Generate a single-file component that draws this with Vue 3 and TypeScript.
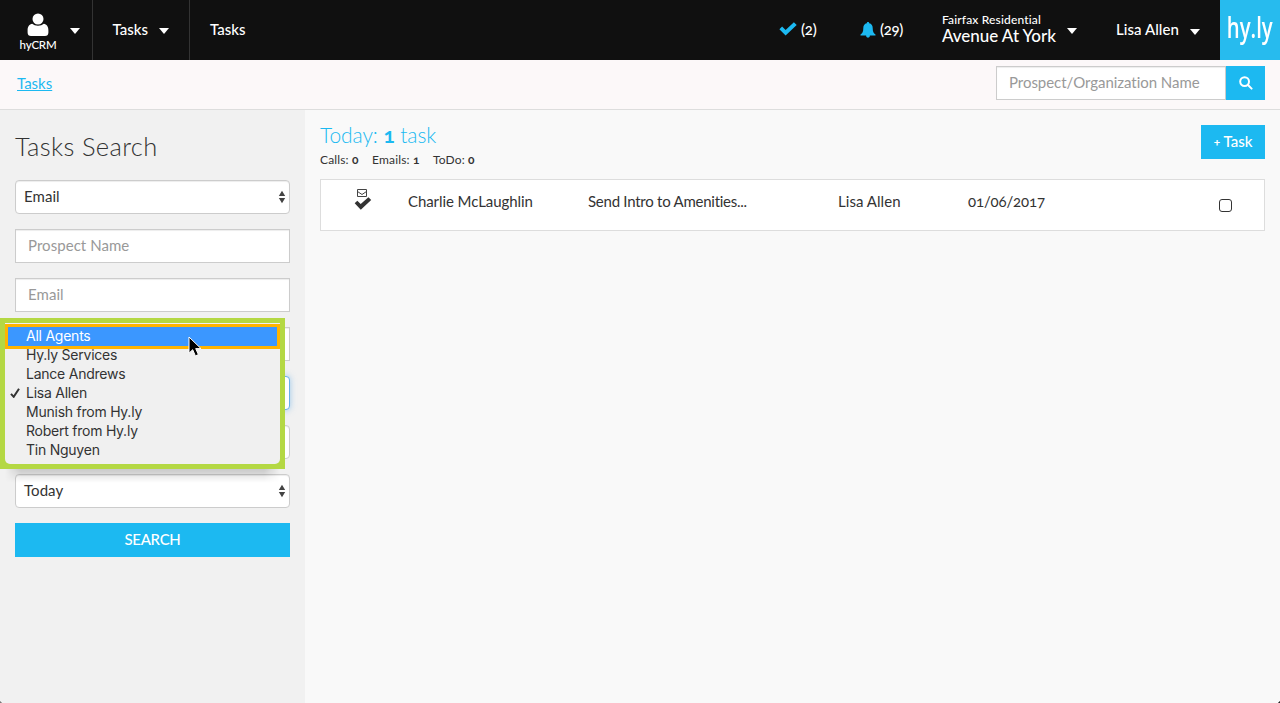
<script setup lang="ts">
interface Agent {
  name: string
  selected?: boolean
  active?: boolean
}

const agents: Agent[] = [
  { name: 'All Agents', active: true },
  { name: 'Hy.ly Services' },
  { name: 'Lance Andrews' },
  { name: 'Lisa Allen', selected: true },
  { name: 'Munish from Hy.ly' },
  { name: 'Robert from Hy.ly' },
  { name: 'Tin Nguyen' },
]
</script>

<template>
  <div class="page">
    <header class="topbar">
      <div class="brand">
        <div class="brand-mark">
          <svg class="user" width="22" height="24" viewBox="0 0 22 24">
            <path d="M5.200 10.700C2.400 11 .6 13.500.6 17.400v2c0 2.300 1.300 3.600 3.400 3.600h14c2.100 0 3.400-1.300 3.400-3.600v-2c0-3.900-1.800-6.400-4.600-6.700-1.500 1.300-3.400 2-5.800 2s-4.300-.7-5.800-2z" />
            <circle cx="11" cy="6" r="5.500" />
          </svg>
          <span class="brand-name">hyCRM</span>
        </div>
        <i class="caret"></i>
      </div>
      <div class="module"><span>Tasks</span><i class="caret"></i></div>
      <div class="section">Tasks</div>
      <div class="counter done">
        <svg width="18" height="14" viewBox="0 0 18 14"><path d="M.4 7.300 3.100 4.600l3.500 3.500L14.900.2l2.800 2.700L6.600 13.400z" /></svg>
        <span>(2)</span>
      </div>
      <div class="counter alerts">
        <svg width="16" height="16" viewBox="0 0 16 16"><path d="M8 0c.7 0 1.200.5 1.200 1.200 2.400.5 3.500 2.400 3.500 4.700 0 3.700.9 5.400 2.800 6.700v1h-5.600A1.900 1.900 0 0 1 8 15.700a1.900 1.900 0 0 1-1.900-2.100H.5v-1c1.900-1.300 2.800-3 2.800-6.700 0-2.300 1.100-4.200 3.500-4.700C6.800.5 7.300 0 8 0z" /></svg>
        <span>(29)</span>
      </div>
      <div class="property">
        <div class="property-text">
          <span class="company">Fairfax Residential</span>
          <span class="community">Avenue At York</span>
        </div>
        <i class="caret"></i>
      </div>
      <div class="account"><span>Lisa Allen</span><i class="caret"></i></div>
      <div class="logo"><span>hy.ly</span></div>
    </header>

    <div class="subbar">
      <a class="crumb">Tasks</a>
      <div class="lookup">
        <div class="lookup-input"><span>Prospect/Organization Name</span></div>
        <div class="lookup-btn">
          <svg width="14" height="14" viewBox="0 0 14 14"><circle cx="5.600" cy="5.600" r="4.400" /><path d="m9 9 3.600 3.600" /></svg>
        </div>
      </div>
    </div>

    <div class="body">
      <aside class="sidebar">
        <h2>Tasks Search</h2>
        <div class="field select">
          <span>Email</span>
          <svg class="arrows" width="8" height="14" viewBox="0 0 8 14"><path d="M4 .7 7.200 6H.8zM4 13.300.8 8h6.400z" /></svg>
        </div>
        <div class="field"><span class="ph">Prospect Name</span></div>
        <div class="field"><span class="ph">Email</span></div>
        <div class="field"></div>
        <div class="field select focused"></div>
        <div class="field select"></div>
        <div class="field select">
          <span>Today</span>
          <svg class="arrows" width="8" height="14" viewBox="0 0 8 14"><path d="M4 .7 7.200 6H.8zM4 13.300.8 8h6.400z" /></svg>
        </div>
        <div class="search-btn">SEARCH</div>
      </aside>

      <main class="content">
        <div class="summary">
          <div>
            <h3>Today: <b>1</b> task</h3>
            <div class="totals">
              <span>Calls: <b>0</b></span><span>Emails: <b>1</b></span><span>ToDo: <b>0</b></span>
            </div>
          </div>
          <div class="add-btn"><span class="plus">+</span> Task</div>
        </div>
        <div class="row">
          <div class="kind">
            <svg width="18" height="22" viewBox="0 0 18 22">
              <path class="mail" d="M3.500 1.500h9v7h-9zM3.500 3.500 8 6.500l4.500-3" />
              <path class="tick" d="m.7 15.300 2.600-2.500 3.400 3.300 7.700-6.800 2.800 2.600L6.800 21.800z" />
            </svg>
          </div>
          <div class="who">Charlie McLaughlin</div>
          <div class="what">Send Intro to Amenities...</div>
          <div class="agent">Lisa Allen</div>
          <div class="date">01/06/2017</div>
          <div class="box"></div>
        </div>
      </main>
    </div>

    <div class="menu">
      <ul>
        <li v-for="a in agents" :key="a.name" :class="{ active: a.active }">
          <svg v-if="a.selected" class="mark" width="10" height="10" viewBox="0 0 10 10"><path d="m1 5.800 2.700 3L9 .8" /></svg>
          <span>{{ a.name }}</span>
        </li>
      </ul>
      <div class="ring"></div>
    </div>
    <svg class="pointer" width="14" height="22" viewBox="0 0 14 22"><path d="M1 1v16.200l3.700-3.500 2.700 6.200 3-1.300-2.700-6H13z" /></svg>
    <i class="corner left"></i>
    <i class="corner right"></i>
  </div>
</template>

<style>
html, body { margin: 0; overflow: hidden; }
</style>

<style scoped>
* { box-sizing: border-box; }
.page {
  position: relative;
  width: 1280px;
  height: 703px;
  overflow: hidden;
  background: #f9f9f9;
  color: #333;
  font: 14px/20px Lato, "Open Sans", sans-serif;
  font-variant-ligatures: no-common-ligatures;
  font-feature-settings: "onum" 1, "liga" 0;
  display: flex;
  flex-direction: column;
  white-space: nowrap;
}
.topbar {
  height: 60px;
  flex: none;
  display: flex;
  background: #101010;
  color: #fff;
  font-size: 15px;
  font-weight: 500;
}
.caret {
  width: 10px;
  height: 6px;
  background: #fff;
  clip-path: polygon(0 0, 100% 0, 50% 100%);
  flex: none;
}
.brand { width: 93px; border-right: 1px solid #333; padding-left: 19px; display: flex; }
.brand-mark { width: 38px; padding-top: 13px; display: flex; flex-direction: column; align-items: center; }
.user { fill: #fff; display: block; }
.brand-name { font-size: 11.500px; line-height: 14px; margin-top: 1px; font-weight: 500; letter-spacing: -.2px; }
.brand .caret { margin: 28px 0 0 13px; }
.module { width: 97px; border-right: 1px solid #333; padding-left: 19.500px; display: flex; line-height: 58px; }
.module span { width: 36.500px; }
.module .caret { margin: 28px 0 0 10px; }
.section { padding-left: 20px; line-height: 58px; width: 588px; }
.counter { display: flex; line-height: 58px; fill: #1cb9f1; }
.done { width: 82px; padding-left: 1px; }
.done svg { margin-top: 22px; }
.done span { margin-left: 4px; letter-spacing: -.2px; }
.alerts { width: 82px; }
.alerts svg { margin-top: 22px; }
.alerts span { margin-left: 4px; letter-spacing: -.3px; }
.property { width: 174px; display: flex; }
.property-text { width: 114px; padding-top: 12px; display: flex; flex-direction: column; }
.company { font-size: 12px; line-height: 16px; letter-spacing: .15px; }
.community { font-size: 17px; line-height: 16px; letter-spacing: -.05px; }
.property .caret { margin: 28px 0 0 11px; }
.account { width: 104px; display: flex; line-height: 58px; }
.account span { width: 63px; letter-spacing: .05px; }
.account .caret { margin: 29px 0 0 11px; }
.logo { width: 60px; height: 60px; background: #27bbee; display: flex; justify-content: center; }
.logo span { font: 600 29px/54px "Open Sans", sans-serif; transform: scaleX(.7); }
.subbar {
  height: 50px;
  flex: none;
  background: #fcf8f9;
  border-bottom: 1px solid #ddd;
  display: flex;
  justify-content: space-between;
  padding: 6px 15px 0 17px;
}
.crumb { color: #1cb9f1; font-size: 15px; line-height: 35px; text-decoration: underline; }
.lookup { display: flex; }
.lookup-input {
  width: 230px;
  height: 34px;
  border: 1px solid #ccc;
  background: #fff;
  box-shadow: inset 0 1px 1px rgba(0, 0, 0, .075);
  padding-left: 12px;
  line-height: 31px;
  color: #999;
  font-size: 15px;
  letter-spacing: -.04px;
}
.lookup-btn { width: 39px; height: 34px; background: #1cb9f1; display: flex; align-items: center; justify-content: center; }
.lookup-btn svg { fill: none; stroke: #fff; stroke-width: 2; stroke-linecap: round; }
.body { flex: 1; display: flex; }
.sidebar { width: 305px; background: #f1f1f1; padding: 24px 15px 0; }
h2 { margin: 0 0 20px; font-size: 25.500px; line-height: 25px; height: 26px; font-weight: 300; color: #333; letter-spacing: .35px; }
.field {
  height: 34px;
  margin-bottom: 15px;
  border: 1px solid #ccc;
  background: #fff;
  box-shadow: inset 0 1px 1px rgba(0, 0, 0, .075);
  padding: 0 4px 0 12px;
  line-height: 32px;
  font-size: 15px;
  display: flex;
  justify-content: space-between;
}
.field span { line-height: 30px; letter-spacing: .05px; }
.select { border-radius: 4px; padding: 0 3px 0 8px; }
.focused { border-color: #66afe9; box-shadow: 0 0 6px rgba(102, 175, 233, .6); }
.ph { color: #999; }
.arrows { fill: #444; margin-top: 9px; }
.search-btn { height: 34px; background: #1cb9f1; color: #fff; text-align: center; line-height: 32px; font-size: 15px; font-weight: 500; letter-spacing: -.3px; }
.content { flex: 1; padding: 15px 15px 0; }
.summary { display: flex; justify-content: space-between; height: 54px; }
h3 { margin: 0; font-size: 21px; line-height: 20px; height: 22px; font-weight: 300; color: #1cb9f1; letter-spacing: -.1px; }
h3 b { font-weight: 700; }
.totals { display: flex; gap: 13.500px; font-size: 12px; line-height: 16px; margin-top: 5px; letter-spacing: .15px; }
.add-btn { width: 64px; height: 34px; background: #1cb9f1; color: #fff; font-size: 15px; line-height: 33px; text-align: center; font-weight: 500; }
.plus { font-size: 12px; font-weight: 700; position: relative; top: -1px; }
.row { height: 52px; background: #fff; border: 1px solid #ddd; display: flex; line-height: 43px; font-size: 15px; }
.kind { width: 87px; padding: 8px 0 0 33px; line-height: 0; }
.mail { fill: none; stroke: #444; stroke-width: 1; }
.tick { fill: #333; }
.who { width: 180px; letter-spacing: -.08px; }
.what { width: 250px; letter-spacing: -.25px; }
.agent { width: 130px; letter-spacing: .05px; }
.date { width: 251px; letter-spacing: -.15px; }
.box { width: 13px; height: 13px; border: 1px solid #333; border-radius: 3px; margin-top: 19px; }
.menu {
  position: absolute;
  left: 0;
  top: 318px;
  width: 285px;
  height: 151px;
  border: 5px solid #b4d843;
  background: #b4d843;
}
.menu::after {
  content: "";
  position: absolute;
  left: 0;
  top: 146px;
  width: 275px;
  height: 14px;
  background: linear-gradient(rgba(0, 0, 0, .16), transparent);
  mask-image: linear-gradient(90deg, transparent, #000 16px, #000 259px, transparent);
}
ul {
  list-style: none;
  margin: 0;
  padding: 4px 0 5px;
  height: 141px;
  background: #f0f0f0;
  border-radius: 0 0 5px 5px;
  font: 14px/18px Inter, Roboto, sans-serif;
  letter-spacing: -.24px;
}
li { height: 19px; padding-left: 21px; position: relative; }
.active { background: #3b97ff; color: #fff; }
.mark { position: absolute; left: 5px; top: 4px; fill: none; stroke: #333; stroke-width: 2; }
.ring { position: absolute; left: 0; top: 1px; width: 275px; height: 25px; border: 3px solid #ffb400; }
.pointer { position: absolute; left: 188px; top: 336px; fill: #000; stroke: #fff; stroke-width: 1; }
.corner { position: absolute; bottom: 0; width: 4px; height: 4px; }
.left { left: 0; background: radial-gradient(circle at 100% 0, transparent 4px, #777 4.500px); }
.right { right: 0; background: radial-gradient(circle at 0 0, transparent 4px, #222 4.500px); }
</style>
